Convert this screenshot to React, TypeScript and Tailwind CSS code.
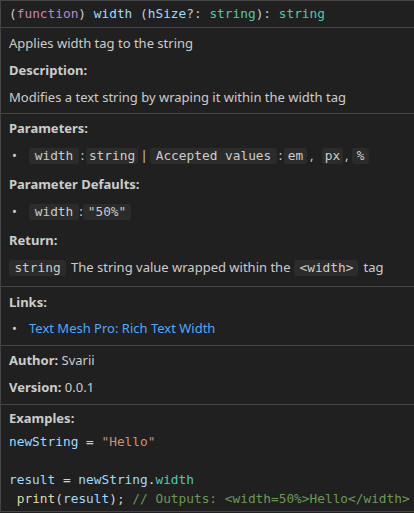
import React from "react";

const mono = { fontFamily: '"DejaVu Sans Mono", monospace' };

function Chip({ children, className = "" }: { children: React.ReactNode; className?: string }) {
  return (
    <span
      className={"inline-block shrink-0 rounded-[3px] bg-[#2b2b2b] text-center text-[12.8px] leading-[16px] text-[#cccccc] " + className}
      style={mono}
    >
      {children}
    </span>
  );
}

function Sep({ children, className = "" }: { children: React.ReactNode; className?: string }) {
  return <span className={"inline-block shrink-0 text-[#cccccc] " + className}>{children}</span>;
}

function Bullet() {
  return <span className="inline-block shrink-0 w-[20px] pl-[3px] text-[#cccccc]">•</span>;
}

export default function App() {
  return (
    <div
      className="w-[414px] h-[513px] bg-[#202020] text-[#cccccc] text-[13px]"
      style={{ fontFamily: '"Noto Sans", sans-serif' }}
    >
      <div className="h-[512px] border-l border-t border-b border-[#454545] flex flex-col">
        {/* header */}
        <div
          className="h-[26px] shrink-0 flex items-center pl-[8px] text-[12.8px] whitespace-nowrap"
          style={mono}
        >
          <span className="text-[#cccccc]">(</span>
          <span className="text-[#c586c0]">function</span>
          <span className="text-[#cccccc]">)&nbsp;</span>
          <span className="text-[#9cdcfe]">width</span>
          <span className="text-[#cccccc]">&nbsp;(</span>
          <span className="text-[#9cdcfe]">hSize</span>
          <span className="text-[#cccccc]">?:&nbsp;</span>
          <span className="text-[#4ec9b0]">string</span>
          <span className="text-[#cccccc]">):&nbsp;</span>
          <span className="text-[#4ec9b0]">string</span>
        </div>
        <div className="h-px shrink-0 bg-[#454545]" />

        {/* section 2 */}
        <div className="shrink-0 pl-[8px] pt-[6px] pb-[6px] flex flex-col gap-[8px]">
          <div className="h-[19px] leading-[19px]">Applies width tag to the string</div>
          <div className="h-[19px] leading-[19px] font-bold">Description:</div>
          <div className="h-[19px] leading-[19px] whitespace-nowrap">Modifies a text string by wraping it within the width tag</div>
        </div>
        <div className="h-px shrink-0 bg-[#454545]" />

        {/* section 3 */}
        <div className="shrink-0 pl-[8px] pt-[5px] pb-[9px] flex flex-col">
          <div className="h-[19px] leading-[19px] font-bold">Parameters:</div>
          <div className="h-[19px] mt-[8px] flex items-center whitespace-nowrap">
            <Bullet />
            <Chip className="w-[50px]">width</Chip>
            <Sep className="w-[7px] text-center">:</Sep>
            <Chip className="w-[52px]">string</Chip>
            <Sep className="w-[12px] text-center">|</Sep>
            <Chip className="w-[127px]">Accepted values</Chip>
            <Sep className="w-[7px] text-center">:</Sep>
            <Chip className="w-[23px]">em</Chip>
            <Sep className="w-[15px] pl-[3px]">,</Sep>
            <Chip className="w-[21px]">px</Chip>
            <Sep className="w-[9px] pl-[2px]">,</Sep>
            <Chip className="w-[17px]">%</Chip>
          </div>
          <div className="h-[19px] mt-[10px] leading-[19px] font-bold">Parameter Defaults:</div>
          <div className="h-[19px] mt-[8px] flex items-center whitespace-nowrap">
            <Bullet />
            <Chip className="w-[50px]">width</Chip>
            <Sep className="w-[4px] text-center">:</Sep>
            <Chip className="w-[48px]">"50%"</Chip>
          </div>
          <div className="h-[19px] mt-[10px] leading-[19px] font-bold">Return:</div>
          <div className="h-[19px] mt-[8px] flex items-center whitespace-nowrap">
            <Chip className="w-[57px]">string</Chip>
            <Sep className="ml-[5px] mr-[4px]">The string value wrapped within the</Sep>
            <Chip className="w-[64px]">&lt;width&gt;</Chip>
            <Sep className="ml-[5px]">tag</Sep>
          </div>
        </div>
        <div className="h-px shrink-0 bg-[#454545]" />

        {/* section 4 */}
        <div className="shrink-0 pl-[8px] pt-[6px] pb-[7px] flex flex-col">
          <div className="h-[19px] leading-[19px] font-bold">Links:</div>
          <div className="h-[19px] mt-[7px] flex items-center whitespace-nowrap">
            <Bullet />
            <span className="text-[#4daafc]">Text Mesh Pro: Rich Text Width</span>
          </div>
        </div>
        <div className="h-px shrink-0 bg-[#454545]" />

        {/* section 5 */}
        <div className="shrink-0 pl-[8px] pt-[5px] pb-[7px] flex flex-col gap-[8px]">
          <div className="h-[19px] leading-[19px]">
            <span className="font-bold">Author:</span> Svarii
          </div>
          <div className="h-[19px] leading-[19px]">
            <span className="font-bold">Version:</span> 0.0.1
          </div>
        </div>
        <div className="h-px shrink-0 bg-[#454545]" />

        {/* section 6 */}
        <div className="shrink-0 pl-[8px] pt-[4px] pb-[3px] flex flex-col">
          <div className="h-[19px] leading-[19px] font-bold">Examples:</div>
          <div className="mt-[4px] text-[12.8px] leading-[19px] whitespace-pre" style={mono}>
            <div className="h-[19px]">
              <span className="text-[#9cdcfe]">newString</span>
              <span className="text-[#d4d4d4]"> = </span>
              <span className="text-[#ce9178]">"Hello"</span>
            </div>
            <div className="h-[19px]"> </div>
            <div className="h-[19px]">
              <span className="text-[#9cdcfe]">result</span>
              <span className="text-[#d4d4d4]"> = </span>
              <span className="text-[#9cdcfe]">newString</span>
              <span className="text-[#d4d4d4]">.</span>
              <span className="text-[#4ec9b0]">width</span>
            </div>
            <div className="h-[19px]">
              <span className="text-[#d4d4d4]"> </span>
              <span className="text-[#dcdcaa]">print</span>
              <span className="text-[#d4d4d4]">(</span>
              <span className="text-[#9cdcfe]">result</span>
              <span className="text-[#d4d4d4]">); </span>
              <span className="text-[#6a9955]">// Outputs: &lt;width=50%&gt;Hello&lt;/width&gt;</span>
            </div>
          </div>
        </div>
      </div>
    </div>
  );
}
